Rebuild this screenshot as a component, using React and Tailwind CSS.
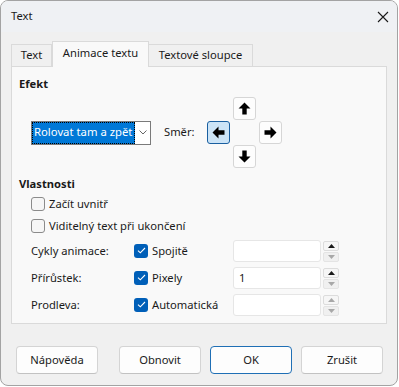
const FONT = { fontFamily: '"Noto Sans", "Open Sans", sans-serif' };

function BlockArrow({ rotate = 0 }) {
  return (
    <svg width="13" height="13" viewBox="0 0 13 13" style={{ transform: `rotate(${rotate}deg)` }}>
      <path d="M6.5 0.5 L12.5 6.5 L8.7 6.5 L8.7 12.5 L4.3 12.5 L4.3 6.5 L0.5 6.5 Z" fill="#000" />
    </svg>
  );
}

function ArrowButton({ children, active }) {
  return (
    <div
      className={
        "flex h-[23px] w-[23px] items-center justify-center rounded-[3px] border " +
        (active
          ? "border-[#1a5fa0] bg-[#cce4f7]"
          : "border-[#d6d6d6] bg-[#fdfdfd]")
      }
    >
      {children}
    </div>
  );
}

function CheckBox({ checked }) {
  if (checked) {
    return (
      <span className="flex h-[14px] w-[14px] shrink-0 items-center justify-center rounded-[3px] bg-[#005fb8]">
        <svg width="9" height="7" viewBox="0 0 9 7" fill="none">
          <path d="M1 3.6 L3.3 5.8 L8 1" stroke="white" strokeWidth="1.1" />
        </svg>
      </span>
    );
  }
  return (
    <span className="h-[14px] w-[14px] shrink-0 rounded-[3px] border border-[#8b8b8b] bg-[#f6f6f6]" />
  );
}

function Spin({ value, enabledUp }) {
  return (
    <div className="flex items-center">
      <div className="flex h-[22px] w-[88px] items-center rounded-[3px] border border-[#e6e6e6] bg-white px-[5px] text-[#1a1a1a]">
        {value}
      </div>
      <div className="ml-[2px] flex flex-col gap-[1px]">
        <div className="flex h-[10px] w-[16px] items-center justify-center rounded-[2px] border border-[#dcdcdc] bg-[#f6f6f6]">
          <svg width="7" height="4" viewBox="0 0 7 4">
            <path d="M0 4 L3.5 0 L7 4 Z" fill={enabledUp ? "#1a1a1a" : "#a8a8a8"} />
          </svg>
        </div>
        <div className="flex h-[10px] w-[16px] items-center justify-center rounded-[2px] border border-[#e4e4e4] bg-[#f0f0f0]">
          <svg width="7" height="4" viewBox="0 0 7 4">
            <path d="M0 0 L7 0 L3.5 4 Z" fill="#a8a8a8" />
          </svg>
        </div>
      </div>
    </div>
  );
}

function PropRow({ label, check, spin }) {
  return (
    <div className="flex h-[22px] items-center">
      <div className="w-[115px] pl-[12px]">{label}</div>
      <div className="flex w-[99px] items-center gap-[4px]">
        <CheckBox checked />
        <span>{check}</span>
      </div>
      {spin}
    </div>
  );
}

function Btn({ children, primary, className = "" }) {
  return (
    <div
      className={
        "flex h-[28px] w-[82px] items-center justify-center rounded-[4px] border bg-[#fdfdfd] text-[#1a1a1a] " +
        (primary ? "border-[#1f6fb5]" : "border-[#d4d4d4] border-b-[#c2c2c2]") +
        " " +
        className
      }
    >
      {children}
    </div>
  );
}

export default function App() {
  return (
    <div style={FONT} className="h-[387px] w-[399px] bg-white text-[11.2px] text-[#1a1a1a]">
      <div className="flex h-[386px] w-[398px] flex-col overflow-hidden rounded-[8px] border border-[#a3a3a3] bg-[#f0f0f0]">
        <div className="flex h-[31px] shrink-0 items-center justify-between bg-[#eff1f4] pl-[10px] pr-[8px]">
          <span>Text</span>
          <svg width="12" height="12" viewBox="0 0 12 12">
            <path d="M1 1 L11 11 M11 1 L1 11" stroke="#1a1a1a" strokeWidth="1.1" />
          </svg>
        </div>

        <div className="ml-[10px] mt-[9px] flex items-end">
          <div className="flex h-[22px] w-[41px] items-center justify-center border border-b-0 border-[#dadada] bg-[#f0f0f0]">
            Text
          </div>
          <div className="relative z-10 -mb-px flex h-[26px] w-[97px] items-center justify-center border border-b-0 border-[#dadada] bg-[#f9f9f9] pb-[2px]">
            Animace textu
          </div>
          <div className="flex h-[22px] w-[104px] items-center justify-center border border-b-0 border-l-0 border-[#dadada] bg-[#f0f0f0]">
            Textové sloupce
          </div>
        </div>

        <div className="mx-[10px] flex h-[258px] flex-col border border-[#dadada] bg-[#f9f9f9] px-[7px]">
          <div className="mt-[9px] h-[16px] font-bold leading-[16px]">Efekt</div>

          <div className="mt-[5px] flex items-center">
            <div className="ml-[12px] flex h-[24px] w-[120px] items-center border border-[#7a7a7a] bg-white">
              <div className="flex h-full min-w-0 flex-1 items-center overflow-hidden whitespace-nowrap border border-dotted border-black bg-[#0078d7] pl-[1px] text-[11.3px] text-white">
                Rolovat tam a zpět
              </div>
              <div className="flex h-full w-[15px] shrink-0 items-center justify-center">
                <svg width="8" height="5" viewBox="0 0 8 5">
                  <path d="M0.5 0.5 L4 4 L7.5 0.5" stroke="#555" fill="none" strokeWidth="0.9" />
                </svg>
              </div>
            </div>
            <div className="ml-[13px] w-[43px]">Směr:</div>
            <div className="grid grid-cols-[23px_23px_23px] grid-rows-[23px_23px_23px] gap-x-[3px] gap-y-[1px]">
              <div />
              <ArrowButton>
                <BlockArrow />
              </ArrowButton>
              <div />
              <ArrowButton active>
                <BlockArrow rotate={-90} />
              </ArrowButton>
              <div />
              <ArrowButton>
                <BlockArrow rotate={90} />
              </ArrowButton>
              <div />
              <ArrowButton>
                <BlockArrow rotate={180} />
              </ArrowButton>
              <div />
            </div>
          </div>

          <div className="mt-[8px] h-[16px] font-bold leading-[16px]">Vlastnosti</div>

          <div className="mt-[3px] flex h-[18px] items-center gap-[4px] pl-[12px]">
            <CheckBox />
            <span>Začít uvnitř</span>
          </div>
          <div className="mt-[4px] flex h-[18px] items-center gap-[4px] pl-[12px]">
            <CheckBox />
            <span>Viditelný text při ukončení</span>
          </div>

          <div className="mt-[5px] flex flex-col gap-[5px]">
            <PropRow label="Cykly animace:" check="Spojitě" spin={<Spin value="" enabledUp />} />
            <PropRow label="Přírůstek:" check="Pixely" spin={<Spin value="1" enabledUp />} />
            <PropRow label="Prodleva:" check="Automatická" spin={<Spin value="" />} />
          </div>
        </div>

        <div className="mt-[22px] flex items-center pl-[15px]">
          <Btn>Nápověda</Btn>
          <Btn className="ml-[21px]">Obnovit</Btn>
          <Btn primary className="ml-[9px]">OK</Btn>
          <Btn className="ml-[9px]">Zrušit</Btn>
        </div>
      </div>
    </div>
  );
}
